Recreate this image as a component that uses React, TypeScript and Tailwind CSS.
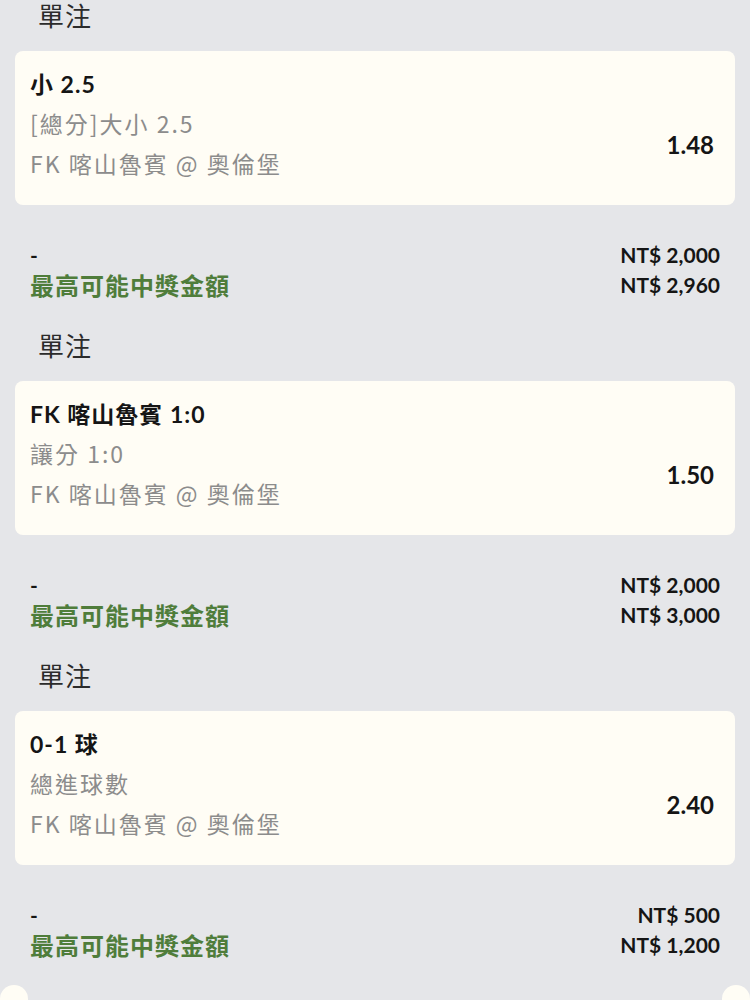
const bets = [
  {
    title: '小 2.5',
    market: '[總分]大小 2.5',
    odds: '1.48',
    stake: 'NT$ 2,000',
    payout: 'NT$ 2,960',
  },
  {
    title: 'FK 喀山魯賓 1:0',
    market: '讓分 1:0',
    odds: '1.50',
    stake: 'NT$ 2,000',
    payout: 'NT$ 3,000',
  },
  {
    title: '0-1 球',
    market: '總進球數',
    odds: '2.40',
    stake: 'NT$ 500',
    payout: 'NT$ 1,200',
  },
];

const match = 'FK 喀山魯賓 @ 奧倫堡';

const latin = "font-['Lato','Noto_Sans_CJK_TC',sans-serif]";
const cjk = "font-['Noto_Sans_CJK_TC',sans-serif]";

const BetSection = ({ bet }: { bet: (typeof bets)[number] }) => {
  return (
    <div className="flex flex-col">
      <div className={`${cjk} pl-[38px] text-[26px] leading-[30px] tracking-[1px] text-[#2b2b2b]`}>單注</div>

      <div className="mx-[15px] mt-[21px] flex h-[154px] rounded-[8px] bg-[#fffdf5] pl-[15px] pr-[21px] pt-[13px]">
        <div className="flex flex-1 flex-col">
          <div className={`${latin} text-[23px] font-bold leading-[40px] tracking-[1px] text-[#151515]`}>{bet.title}</div>
          <div className={`${cjk} text-[23px] leading-[38px] tracking-[2px] text-[#8c8c8c]`}>{bet.market}</div>
          <div className={`${cjk} text-[23px] leading-[42px] tracking-[2px] text-[#8c8c8c]`}>{match}</div>
        </div>
        <div className="flex items-center pb-[8px] pt-[28px]">
          <span className={`${latin} text-[24px] font-bold text-[#151515]`}>{bet.odds}</span>
        </div>
      </div>

      <div className="mt-[35px] flex justify-between px-[30px]">
        <div className="flex flex-col">
          <span className={`${latin} text-[21px] font-bold leading-[30px] text-[#151515]`}>-</span>
          <span className={`${cjk} text-[24px] font-bold leading-[30px] tracking-[1px] text-[#4f7d3b]`}>
            最高可能中獎金額
          </span>
        </div>
        <div className="flex flex-col items-end">
          <span className={`${latin} text-[21px] font-bold leading-[30px] text-[#151515]`}>{bet.stake}</span>
          <span className={`${latin} text-[21px] font-bold leading-[30px] text-[#151515]`}>{bet.payout}</span>
        </div>
      </div>
    </div>
  );
};

export default function App() {
  return (
    <div className="h-[1000px] w-[750px] overflow-hidden bg-[#e5e6e9]">
      <div className="flex flex-col gap-[30px]">
        {bets.map((bet) => (
          <BetSection key={bet.title} bet={bet} />
        ))}
      </div>
      <div className="mt-[25px] flex justify-between">
        <div className="h-[30px] w-[28px] rounded-full bg-[#fffdf5]" />
        <div className="h-[30px] w-[28px] rounded-full bg-[#fffdf5]" />
      </div>
    </div>
  );
}
